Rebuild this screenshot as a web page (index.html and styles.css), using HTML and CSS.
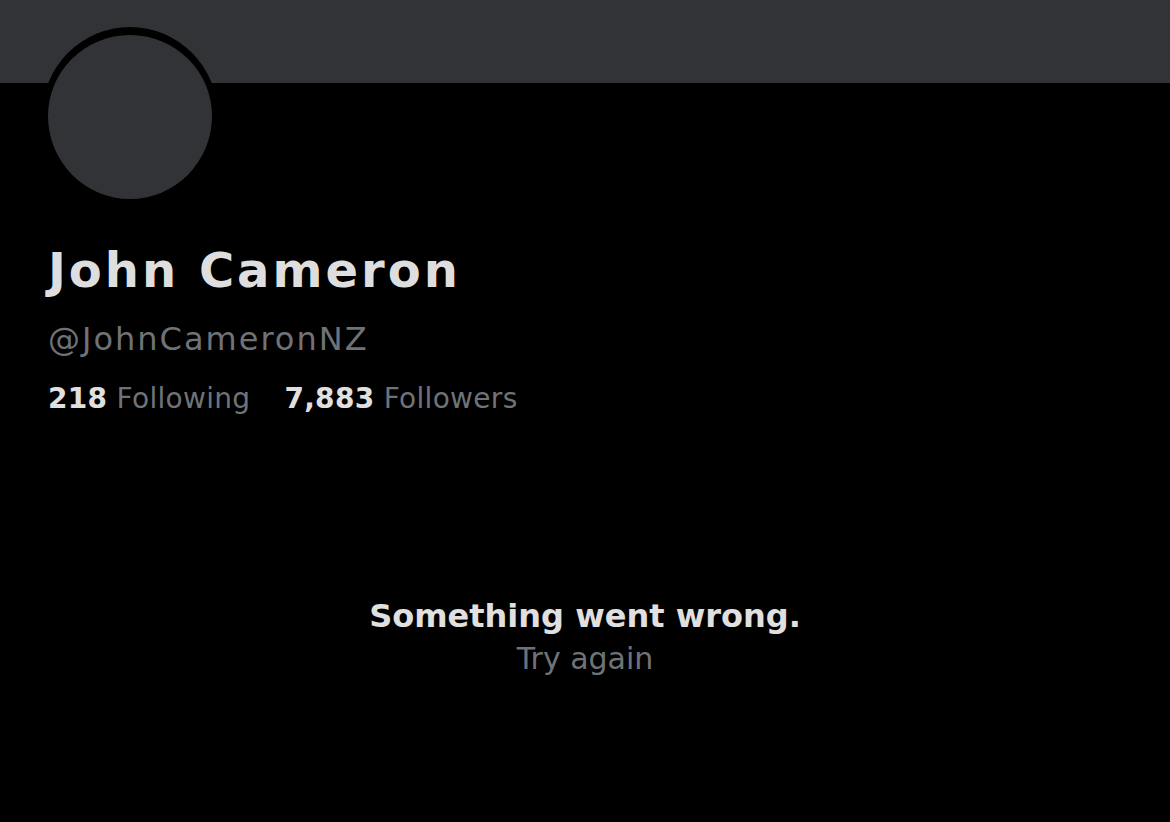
FILE: index.html
```html
<!DOCTYPE html>
<html lang="en">
<head>
    <meta charset="UTF-8">
    <meta name="viewport" content="width=device-width, initial-scale=1.0">
    <title>John Cameron (@JohnCameronNZ)</title>
    <link rel="stylesheet" href="styles.css">
</head>
<body>

    <!-- Header banner -->
    <div class="banner"></div>

    <!-- Profile info -->
    <div class="profile">
        <div class="avatar"></div>
        <h1 class="name">John Cameron</h1>
        <p class="handle">@JohnCameronNZ</p>
        <div class="stats">
            <span><b>218</b> Following</span>
            <span><b>7,883</b> Followers</span>
        </div>
    </div>

    <!-- Error message -->
    <div class="error">
        <p class="error-title">Something went wrong.</p>
        <p class="error-retry">Try again</p>
    </div>

</body>
</html>
```

FILE: styles.css
```css
/* General Styles */
body {
    margin: 0;
    background-color: #000;
    color: #e0e0e0;
    font-family: "DejaVu Sans", "Liberation Sans", sans-serif;
    height: 822px;
    overflow: hidden;
}

p, h1 {
    margin: 0;
}

/* Banner */
.banner {
    height: 83px;
    background-color: #313336;
}

/* Profile */
.profile {
    padding-left: 42px;
}

.avatar {
    width: 164px;
    height: 164px;
    margin-top: -56px;
    border: 6px solid #000;
    border-top-width: 8px;
    border-radius: 50%;
    background-color: #313336;
}

.name {
    margin-top: 37px;
    margin-left: 6px;
    font-size: 48px;
    line-height: 56px;
    font-weight: bold;
    letter-spacing: 3px;
    color: #dedede;
}

.handle {
    margin-top: 21px;
    margin-left: 6px;
    font-size: 32px;
    line-height: 40px;
    letter-spacing: 2px;
    color: #6f7378;
}

.stats {
    display: flex;
    gap: 34px;
    margin-top: 22px;
    margin-left: 6px;
    font-size: 28px;
    line-height: 36px;
    letter-spacing: 0.3px;
    color: #6f7378;
}

.stats b {
    color: #e0e0e0;
}

/* Error */
.error {
    margin-top: 178px;
    text-align: center;
}

.error-title {
    font-size: 32px;
    line-height: 42px;
    font-weight: bold;
    color: #e0e0e0;
}

.error-retry {
    margin-top: 2px;
    font-size: 30px;
    line-height: 40px;
    color: #6f7378;
}
```
